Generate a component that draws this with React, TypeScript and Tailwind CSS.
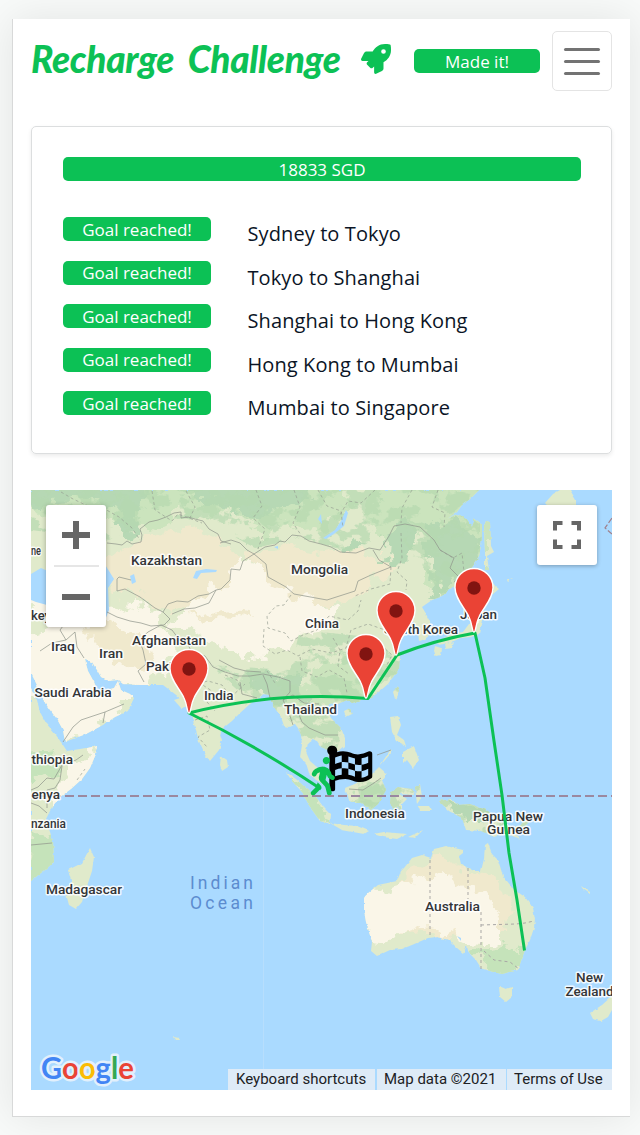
import React from "react";
import { FaFlagCheckered, FaRocket, FaWalking } from "react-icons/fa";

const legs = [
  "Sydney to Tokyo",
  "Tokyo to Shanghai",
  "Shanghai to Hong Kong",
  "Hong Kong to Mumbai",
  "Mumbai to Singapore",
];

const ASIA =
  "M31 490H479L470 499 462 505 457 512 447 519 457 514 466 518 472 527 475 519 482 524 482 538 479 557 471 569 462 577 454 587 447 590 443 596 432 600 422 607 425 612 430 622 432 634 426 638 419 641 418 631 413 622 408 618 402 619 398 613 393 622 400 624 406 625 399 632 396 639 399 650 400 657 399 669 393 677 388 684 380 691 372 697 361 700 352 703 347 700 338 704 332 703 326 707 331 718 341 728 345 738 345 746 338 752 329 758 328 750 321 747 317 741 312 740 308 743 306 752 310 761 318 768 321 777 323 784 316 780 309 773 306 763 300 757 302 745 301 735 298 728 295 724 289 727 284 726 281 717 276 710 271 701 270 695 264 694 257 699 250 704 240 713 232 721 222 729 220 735 222 740 219 750 210 761 205 755 200 744 196 731 192 717 189 706 181 708 174 700 180 698 171 691 163 685 139 685 123 684 118 680 108 681 101 677 97 670 92 662 85 660 88 671 94 682 98 691 103 691 114 688 118 681 121 690 130 694 134 698 128 711 115 717 103 725 86 734 65 742 63 730 57 719 50 710 41 697 37 685 31 673Z";
const AFRICA =
  "M31 688L37 700 40 712 46 723 56 735 63 745 67 751 80 749 97 746 96 754 90 768 82 779 71 789 60 797 52 807 46 819 49 829 53 841 54 862 45 870 37 876 31 881Z";
const AUSTRALIA =
  "M364 898L367 894 378 885 397 881 401 871 404 868 412 858 422 855 431 858 434 849 446 846 463 850 463 853 459 856 461 864 474 871 481 871 484 859 485 845 488 843 492 854 498 860 503 876 511 886 515 889 519 893 525 897 533 908 535 919 534 928 530 940 525 950 521 961 518 970 506 973 502 974 493 972 481 968 476 960 471 955 468 951 467 946 463 953 457 948 449 940 437 937 428 938 412 945 402 949 390 950 377 956 371 951 372 942 366 922 364 911Z";

const land = [
  ASIA,
  AFRICA,
  AUSTRALIA,
  "M90 848L94 857 92 871 86 889 82 902 76 909 69 905 66 894 72 884 68 870 82 863Z",
  "M221 756L227 760 228 767 222 771 220 765Z",
  "M286 772L296 779 307 789 316 797 325 809 331 815 330 824 320 821 310 807 302 792 292 781Z",
  "M330 823L344 825 357 826 369 831 364 834 342 830Z",
  "M345 788L357 783 369 777 379 767 387 774 382 780 386 790 378 804 371 810 361 803 350 803Z",
  "M391 792L398 787 412 789 414 795 399 794 407 799 402 804 402 814 397 806 394 815 390 803Z",
  "M390 717L398 716 401 725 397 735 404 740 406 746 397 741 392 732Z",
  "M403 752L414 746 419 760 413 768 407 760 403 764Z",
  "M379 767L391 749 392 752Z",
  "M393 692L397 686 399 691 395 699Z",
  "M344 711L350 708 352 714 346 717Z",
  "M439 801L451 799 458 805 470 804 486 810 494 815 507 826 521 839 504 833 494 837 481 831 466 830 462 818 449 811Z",
  "M373 834L384 832 407 834 397 839 383 837Z",
  "M408 837L423 830 415 838Z",
  "M415 787L420 784 422 797 417 804Z",
  "M418 806L429 806 432 811 420 811Z",
  "M511 827L520 826 526 818 529 822 521 830Z",
  "M499 986L506 989 512 987 512 997 506 1002 500 997Z",
  "M484 526L486 521 490 522 491 546 494 552 487 556 489 570 485 570 485 553Z",
  "M478 584L487 580 499 589 493 594 482 596 476 602Z",
  "M477 601L484 614 481 624 479 634 471 637 461 638 447 643 440 645 436 642 452 634 463 632 472 620Z",
  "M435 646L441 648 440 655 436 656 434 651Z",
  "M445 644L454 642 452 648 446 649Z",
  "M507 580L513 578 508 582Z",
  "M545 503L553 494 560 490H570L576 500 576 515 556 515Z",
  "M612 996L602 1005 590 1013 593 1019 601 1021 608 1017 612 1010Z",
  "M581 886L590 892 590 894 583 889Z",
  "M173 1037L180 1038 179 1040 175 1040Z",
].join(" ");

const borders =
  "M107 543L116 544 122 545 127 541 132 544 141 542 142 535 140 529 149 522 158 520 166 517 174 513 181 512 181 518 188 517 195 519 203 521 209 529 218 534 221 541 231 544 M220 543L231 540 240 543 247 550 254 554 265 547 275 545 280 541 285 542 292 535 301 536 309 541 321 544 331 547 340 552 356 553 369 548 380 550 389 536 394 526 405 524 420 527 434 540 440 550 454 558 450 568 458 576 M254 554L266 564 268 577 286 587 294 594 327 600 355 591 358 581 371 575 391 567 379 560 373 550 M254 554L243 561 240 570 231 569 230 580 221 589 216 590 209 594 198 596 188 602 177 601 168 604 163 612 155 608 140 597 125 589 117 591 117 579 119 577 131 580 M163 612L170 619 164 625 151 626 141 623 130 621 117 617 107 612 M216 590L209 603 195 608 184 609 172 614 M40 651L52 643 66 640 75 632 77 647 84 658 M66 640L60 630 66 622 80 624 97 618 M144 682L138 671 146 664 143 650 139 640 148 632 161 625 172 630 178 638 186 640 191 651 205 656 213 667 225 672 238 676 250 676 263 674 278 677 290 681 290 692 283 700 289 713 293 725 M219 660L234 668 246 671 261 672 M240 682L242 694 257 698 M263 675L267 684 270 698 M283 700L293 695 304 703 319 704 M298 712L302 722 309 728 325 735 338 735 M47 813L39 806 31 803 M31 790L38 787 47 778 54 779 62 765 76 760 83 755 M63 742L73 727 81 720 105 712 124 704 M105 712L103 723 M31 845L52 843 M62 766L60 780 55 788 47 790 47 808 M349 789L363 790 374 783 381 778 M377 755L391 750";
const regional =
  "M61 492L73 499 88 506 103 508 119 517 132 528 140 540 M152 491L155 510 172 521 178 514 202 523 M186 491L195 507 189 520 M256 490L262 506 253 518 265 529 258 549 M294 490L300 507 293 523 301 535 M318 490L327 506 341 511 343 528 M375 490L361 503 348 501 340 515 M412 490L402 508 401 523 M438 490L432 507 445 513 444 527 M440 550L453 558 462 553 464 572 452 584 M401 533L402 558 397 572 407 581 406 590 M391 567L390 584 371 589 355 596 M291 595L284 605 276 606 267 616 268 628 285 633 291 641 303 635 317 630 329 616 348 620 358 611 361 600 M264 629L263 646 275 654 287 650 298 656 312 649 331 653 346 648 351 630 368 624 385 630 392 623 M300 657L302 671 317 677 329 670 344 678 347 693 M333 638L340 650 338 666 349 674 M356 655L366 666 359 678 369 686 M381 645L392 655 386 667 M192 654L202 663 198 682 212 691 207 702 215 711 M188 686L208 681 222 685 231 697 245 684 M195 720L207 716 210 730 198 737 207 747 M225 675L237 680 240 687 M267 671L275 683 M77 780L85 769";

const labels: [string, number, number, number][] = [
  ["ne", 31, 555, 10],
  ["Kazakhstan", 131, 565, 71],
  ["Mongolia", 291, 574, 57],
  ["China", 305, 628, 34],
  ["key", 31, 620, 20],
  ["Iraq", 51, 651, 24],
  ["Iran", 99, 658, 24],
  ["Afghanistan", 132, 644.5, 74],
  ["Pakistan", 146, 671, 53],
  ["South Korea", 384, 634, 74],
  ["Japan", 460, 619, 37],
  ["Saudi Arabia", 34.5, 697, 77],
  ["India", 204, 700, 29.5],
  ["Thailand", 284, 713.5, 53],
  ["thiopia", 31.5, 764, 41.5],
  ["enya", 31.5, 799, 28.5],
  ["nzania", 31, 828, 35],
  ["Madagascar", 46, 893.5, 76],
  ["Indonesia", 345, 818, 60],
  ["Papua New", 473, 821, 70],
  ["Guinea", 487, 834, 43],
  ["Australia", 425, 911, 55],
  ["New", 576, 982, 27],
  ["Zealand", 565.5, 995.5, 48],
];

const pins: [number, number][] = [
  [396, 655],
  [366, 698],
  [474, 632],
  [189, 713],
];

function WorldMap() {
  return (
    <svg viewBox="31 490 581 600" className="block h-[600px] w-[581px]">
      <defs>
        <clipPath id="land">
          <path d={land} />
        </clipPath>
        <filter id="coast" x="-2%" y="-2%" width="104%" height="104%">
          <feTurbulence type="fractalNoise" baseFrequency="0.18" numOctaves="2" seed="4" result="n" />
          <feDisplacementMap in="SourceGraphic" in2="n" scale="3" xChannelSelector="R" yChannelSelector="G" />
        </filter>
        <filter id="terrain" x="-5%" y="-5%" width="110%" height="110%">
          <feTurbulence type="fractalNoise" baseFrequency="0.06" numOctaves="3" seed="9" result="n" />
          <feDisplacementMap in="SourceGraphic" in2="n" scale="30" xChannelSelector="R" yChannelSelector="G" />
        </filter>
        <filter id="patches" x="0" y="0" width="100%" height="100%" colorInterpolationFilters="sRGB">
          <feTurbulence type="fractalNoise" baseFrequency="0.05 0.065" numOctaves="4" seed="21" />
          <feColorMatrix values="0 0 0 0 0.71  0 0 0 0 0.85  0 0 0 0 0.69  16 0 0 0 -7.8" />
          <feComposite in2="SourceGraphic" operator="in" />
        </filter>
      </defs>
      <rect x="31" y="490" width="581" height="600" fill="#aadaff" />
      <g filter="url(#coast)">
        <g clipPath="url(#land)">
          <rect x="20" y="480" width="600" height="610" fill="#e0eacb" />
          <g filter="url(#terrain)">
            <path
              d="M10 470H340L350 505 320 530 290 520 265 535 235 515 190 510 150 530 110 520 70 525 30 505ZM370 480H490V600L450 605 430 580 440 550 405 520 385 540 365 520ZM320 665L360 650 395 670 360 705 290 710 250 700 300 685Z"
              fill="#cbe4bd"
            />
            <path
              d="M20 475H150L145 500 130 540 122 525 118 505 90 498 30 505ZM180 478L300 475 315 498 290 515 272 508 258 522 225 512 215 500 190 500ZM425 525L450 520 483 535 470 575 445 590 430 600 437 575 428 555ZM388 530L402 522 417 532 410 552 392 570 386 560ZM340 545L365 540 362 552 345 555ZM245 680L300 672 310 700 275 705Z"
              fill="#b6d8b4"
            />
            <path
              d="M110 560L140 540 190 525 225 545 240 565 215 590 195 600 160 612 130 590 105 600 100 580ZM250 555L285 545 310 550 380 553 395 570 365 590 340 605 290 605 265 585Z"
              fill="#f0e9cd"
            />
            <path
              d="M20 640L70 620 115 610 140 600 165 625 175 640 160 675 125 690 125 715 65 745 30 690ZM31 600L50 590 75 600 30 620ZM165 625L190 600 215 590 240 560 250 560 270 585 320 605 345 610 330 630 300 635 275 655 240 658 215 645 190 628Z"
              fill="#faf6e8"
            />
            <path d="M80 630L115 622 145 640 155 672 120 665 95 645ZM190 618L225 608 255 612 230 620Z" fill="#f0e9cd" />
            <path d="M400 880L430 855 475 870 495 880 512 905 505 930 480 930 450 940 430 932 405 935 375 935Z" fill="#f0e9cd" />
            <path d="M350 897L402 882 440 875 485 893 500 920 500 942 465 940 445 930 420 928 390 938 365 935Z" fill="#faf6e8" />
            <path d="M470 950L505 945 530 955 505 980ZM31 830L60 840 50 880 20 890ZM289 772L320 800 330 825 300 810ZM350 800L380 785 390 800 370 812Z" fill="#c5e3ba" />
            <path d="M20 755L55 750 50 775 30 785Z" fill="#c5e3ba" />
            <path d="M75 765L105 745 85 785 60 800 40 800Z" fill="#faf6e8" />
            <path d="M440 798L475 805 500 820 470 820Z" fill="#b6d8b4" />
          </g>
          <path
            d="M31 490H480V590L445 600 425 570 395 530 350 552 300 538 255 548 200 518 150 520 110 540 31 530Z M300 630L400 640V700L340 740 325 780 290 720 250 700 210 665 290 670Z M340 780H420V820H340Z M435 795H530V840H435Z"
            fill="#fff"
            opacity="0.7"
            filter="url(#patches)"
          />
        </g>
      </g>
      <g fill="#aadaff">
        <path d="M323 538L335 530 341 521 346 510 348 513 344 526 334 534 326 539Z" />
        <path d="M193 578L196 571 206 569 217 570 216 572 201 573 197 579Z" />
        <path d="M31 574L41 568 52 573 46 580 49 590 58 602 47 605 36 602 31 600Z" />
        <path d="M94 566L104 563 114 579 108 588 109 610 103 625 93 624 87 610 94 603 86 592Z" />
        <path d="M130 576L134 574 136 582 132 584ZM274 547L278 546 278 549ZM318 519L321 514 322 524ZM457 936L461 938 461 941Z" />
      </g>
      <path d={borders} fill="none" stroke="#8f958b" strokeWidth="0.9" opacity="0.8" strokeLinejoin="round" />
      <path d={regional} fill="none" stroke="#959c90" strokeWidth="0.9" strokeDasharray="3 2.6" opacity="0.75" />
      <path
        d="M430 860V938M468 868V899M481 912V972M481 925L516 924 525 923 534 921M484 951L494 960 510 962 519 969"
        fill="none"
        stroke="#a9a7a5"
        strokeWidth="1"
        strokeDasharray="3 3"
      />
      <path d="M31 796H612" stroke="#9b88a0" strokeWidth="2" strokeDasharray="9 4" strokeDashoffset="5" />
      <path d="M612 518L605 528 612 534" fill="none" stroke="#a0808c" strokeWidth="1.2" strokeDasharray="6 2" />
      <path d="M263.5 796V1069" stroke="#b7defd" strokeWidth="1" />

      <g
        fontFamily="Roboto, 'Liberation Sans', sans-serif"
        fontSize="13"
        fontWeight="500"
        fill="#333538"
        stroke="#fff"
        strokeWidth="3"
        strokeLinejoin="round"
        strokeOpacity="0.85"
        paintOrder="stroke"
      >
        {labels.map(([name, x, y, w]) => (
          <text key={name} x={x} y={y} textLength={w} lengthAdjust="spacingAndGlyphs">
            {name}
          </text>
        ))}
      </g>
      <g fontFamily="Roboto, 'Liberation Sans', sans-serif" fontSize="17.5" fill="#5c8ccf">
        <text x="190" y="889" textLength="63">Indian</text>
        <text x="190" y="909" textLength="63">Ocean</text>
      </g>

      <path
        d="M524.500 950.500L517 900 509 853 502 795 494 741 485 678 475 633Q435 640 397 655L368 698.500Q275 691 189 713Q255 745 321 789"
        fill="none"
        stroke="#0cc155"
        strokeWidth="3"
        strokeLinejoin="round"
      />

      {pins.map(([x, y]) => (
        <g key={x} transform={`translate(${x} ${y})`}>
          <path
            d="M0 0C-2 0 -1.500 -8 -5 -15C-9 -24 -19 -33 -19 -44.500A19 19 0 0 1 19 -44.500C19 -33 9 -24 5 -15C1.500 -8 2 0 0 0Z"
            fill="#ea4335"
            stroke="#fff"
            strokeWidth="1.400"
          />
          <circle cx="0" cy="-44" r="6.700" fill="#811411" />
        </g>
      ))}

      <FaFlagCheckered x="326.500" y="745.500" className="h-[46px] w-[46px] text-black" />
      <FaWalking x="303.500" y="757" className="h-[38.5px] w-[38.5px] text-[#0cc155]" />

      <g
        fontFamily="Lato, 'Liberation Sans', sans-serif"
        fontSize="30"
        fontWeight="700"
        paintOrder="stroke"
        stroke="#e2f0fc"
        strokeWidth="5"
        strokeLinejoin="round"
      >
        <text x="41" y="1079" textLength="93" lengthAdjust="spacingAndGlyphs">
          <tspan fill="#4285f4">G</tspan>
          <tspan fill="#ea4335">o</tspan>
          <tspan fill="#fbbc05">o</tspan>
          <tspan fill="#4285f4">g</tspan>
          <tspan fill="#34a853">l</tspan>
          <tspan fill="#ea4335">e</tspan>
        </text>
      </g>
    </svg>
  );
}

function Badge({ children, className }: { children: React.ReactNode; className: string }) {
  return (
    <div className={`flex h-6 items-center justify-center rounded-[5px] bg-[#0cc155] pt-px text-[17px] leading-6 text-white ${className}`}>
      {children}
    </div>
  );
}

export default function App() {
  return (
    <div className="h-[1135px] w-[640px] overflow-hidden bg-[#f8faf9] pt-[19px] pr-[10px] pl-3 font-['Open_Sans','Noto_Sans',sans-serif] text-[#0b1526]">
      <main className="h-[1098px] border-b border-l border-[#d8d9d9] bg-white px-[18px] shadow-[0_0_40px_rgba(0,0,0,0.09)]">
        <header className="flex h-[107px] items-start pt-3">
          <h1 className="flex h-[60px] w-[383px] items-center pb-1 whitespace-nowrap text-[#0cc155]">
            <span className="w-[330px] pb-[2px] font-['Lato',sans-serif] text-[37px] leading-none font-black italic tracking-[-0.3px] [word-spacing:6px]">
              Recharge Challenge
            </span>
            <FaRocket className="h-[30px] w-[30px] shrink-0" />
          </h1>
          <Badge className="mt-[18px] w-[126px]">Made it!</Badge>
          <button aria-label="Menu" className="ml-3 flex h-[60px] w-[60px] flex-col items-center justify-center gap-[9px] rounded-[5px] border border-[#e4e4e4]">
            <span className="h-[3px] w-9 rounded-full bg-[#737373]" />
            <span className="h-[3px] w-9 rounded-full bg-[#737373]" />
            <span className="h-[3px] w-9 rounded-full bg-[#737373]" />
          </button>
        </header>

        <section className="h-[328px] w-[581px] rounded-[5px] border border-[#dcdedf] px-[31px] pt-[30px] shadow-[0_2px_4px_rgba(0,0,0,0.08)]">
          <Badge className="w-[518px]">18833 SGD</Badge>
          <ul className="mt-9">
            {legs.map((leg) => (
              <li key={leg} className="flex h-[43.5px] items-start">
                <Badge className="w-[148px]">Goal reached!</Badge>
                <span className="ml-[36.5px] pt-[3px] text-[20px] leading-[28px] tracking-[0.1px] whitespace-nowrap">{leg}</span>
              </li>
            ))}
          </ul>
        </section>

        <section className="relative mt-9 h-[600px] w-[581px] overflow-hidden">
          <WorldMap />
          <div className="absolute top-[15px] left-[15px] flex h-[122px] w-[60px] flex-col items-center rounded-[3px] bg-white shadow-[0_1px_5px_rgba(0,0,0,0.3)]">
            <button aria-label="Zoom in" className="flex h-[60px] w-full items-center justify-center">
              <svg viewBox="0 0 28 28" className="h-7 w-7"><path d="M11 0h6v11h11v6H17v11h-6V17H0v-6h11z" fill="#666" /></svg>
            </button>
            <div className="h-[2px] w-[45px] shrink-0 bg-[#e6e6e6]" />
            <button aria-label="Zoom out" className="flex h-[60px] w-full items-center justify-center">
              <svg viewBox="0 0 28 6" className="h-[6px] w-7"><path d="M0 0h28v6H0z" fill="#666" /></svg>
            </button>
          </div>
          <button aria-label="Fullscreen" className="absolute top-[15px] right-[15px] flex h-[60px] w-[60px] items-center justify-center rounded-[3px] bg-white shadow-[0_1px_4px_rgba(0,0,0,0.3)]">
            <svg viewBox="0 0 28 28" className="h-7 w-7"><path d="M2 9.500V2H9.500M18.500 2H26V9.500M26 18.500V26H18.500M9.500 26H2V18.500" fill="none" stroke="#666" strokeWidth="4" /></svg>
          </button>
          <div className="absolute right-0 bottom-0 flex h-[21px] text-[15px] leading-[21px] text-[#202124] font-['Roboto',sans-serif]">
            <span className="mr-[2px] w-[147px] bg-[#deebf7] pl-2 whitespace-nowrap">Keyboard shortcuts</span>
            <span className="mr-px w-[129px] bg-[#deebf7] pl-[7px] whitespace-nowrap">Map data ©2021</span>
            <span className="w-[105px] bg-[#deebf7] pl-[7px] whitespace-nowrap">Terms of Use</span>
          </div>
        </section>
      </main>
    </div>
  );
}
